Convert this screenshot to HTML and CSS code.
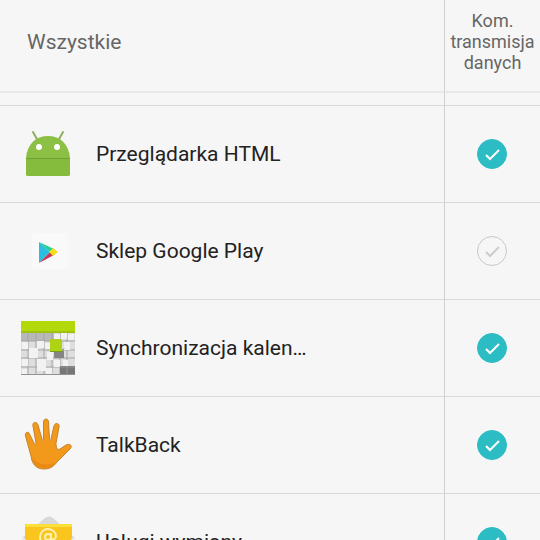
FILE: index.html
```html
<!DOCTYPE html>
<html lang="pl">
  <head>
    <meta charset="UTF-8" />
    <meta name="viewport" content="width=device-width, initial-scale=1.0" />
    <title>Kom. transmisja danych</title>
    <link rel="stylesheet" href="styles.css">
  </head>
  <body>
    <main class="screen">
      <table class="app-table">
        <thead>
          <tr class="head-row">
            <th class="all-apps" scope="col">Wszystkie</th>
            <th class="data-head" scope="col">Kom. transmisja danych</th>
          </tr>
        </thead>
        <tbody>
          <tr class="spacer-row">
            <td></td>
            <td class="data-cell"></td>
          </tr>
          <tr>
            <td>
              <label class="app" for="html">
                <svg class="icon" viewBox="0 0 54 54" aria-hidden="true">
                  <path d="M12 5l5 9M42 5l-5 9" stroke="#8fae5c" stroke-width="2" stroke-linecap="round" />
                  <path d="M5 31C6 17 15 9 27 9s21 8 22 22v16q0 2-2 2H7q-2 0-2-2z" fill="#8cc044" />
                  <path d="M5 32h44v15q0 2-2 2H7q-2 0-2-2z" fill="#86bc3e" />
                  <path d="M5 31.500h44" stroke="#6f9f37" />
                  <circle cx="18" cy="20" r="3" fill="#fff" />
                  <circle cx="36" cy="20" r="3" fill="#fff" />
                </svg>
                <span>Przeglądarka HTML</span>
              </label>
            </td>
            <td class="data-cell"><input class="check" type="checkbox" id="html" checked /></td>
          </tr>
          <tr>
            <td>
              <label class="app" for="play">
                <svg class="icon" viewBox="0 0 54 54" aria-hidden="true">
                  <rect x="11" y="9" width="36" height="36" rx="3" fill="#f9f9f9" />
                  <path d="M18 18v21l11-11z" fill="#29bfe0" />
                  <path d="M18 18l11 10 4-3z" fill="#26cf96" />
                  <path d="M18 39l11-11 4 3z" fill="#c73858" />
                  <path d="M28 28l4-4 5 4-5 4z" fill="#f5dc1c" />
                </svg>
                <span>Sklep Google Play</span>
              </label>
            </td>
            <td class="data-cell"><input class="check" type="checkbox" id="play" /></td>
          </tr>
          <tr>
            <td>
              <label class="app" for="calendar">
                <svg class="icon" viewBox="0 0 54 54" aria-hidden="true">
                  <path d="M0 11h54v43H0z" fill="#dedede" />
                  <path d="M0 12h33v8H0z" fill="#b8b8b8" />
                  <path d="M0 20h54M0 29h54M0 37h54M0 46h54M7 12v42M15 12v42M23 12v42M31 12v42M39 12v42M46 12v42" stroke="#a5a5a5" fill="none" />
                  <g fill="#f2f2f2">
                    <path d="M1 21h6v7H1zM16 20h7v7h-7zM24 22h7v6h-7zM33 13h6v6h-6zM40 12h6v6h-6zM47 13h6v6h-6zM43 21h6v8h-6z" />
                    <path d="M8 27h9v10H8zM1 38h6v7H1zM16 38h9v12h-9zM26 31h6v8h-6zM33 39h6v7h-6zM1 48h5v5H1zM25 47h6v6h-6zM42 39h5v6h-5z" />
                  </g>
                  <path d="M33 30h10v7H33z" fill="#858585" />
                  <path d="M39 45h15v9H39z" fill="#777" />
                  <path d="M39 46h15M46 45v9M0 53.500h54" stroke="#929292" />
                  <path d="M0 0h54v12H0z" fill="#b3d90b" />
                  <path d="M0 11h54" stroke="#8aac12" />
                  <rect x="29" y="18" width="12" height="13" rx="1" fill="#add314" />
                  <path d="M29 30.500h12l2-3" stroke="#799a20" fill="none" />
                </svg>
                <span>Synchronizacja kalen…</span>
              </label>
            </td>
            <td class="data-cell"><input class="check" type="checkbox" id="calendar" checked /></td>
          </tr>
          <tr>
            <td>
              <label class="app" for="talkback">
                <svg class="icon" viewBox="0 0 54 54" aria-hidden="true">
                  <path d="M4.500 18c-1-4 3-5 4-2l5 10c1 1 2 1 1.500-1L12 8c-1-4 4-5 5-1l4 14c.5 2 1.500 2 1.500 0V4c0-4 5-4 5 0l1 17c0 2 1 2 1.500 0l3-13c1-4 6-3 5 1l-3 16c0 4 1 8 4 6l6-4c4-2 7 1 4 4L36 44c-4 5-7 7-13 7-8 0-12-5-13-13z" fill="#f2981b" stroke="#c4842f" />
                  <path d="M11 39c5 7 14 10 25 5-4 4-7 6-13 6-7 0-11-4-12-11z" fill="#e98a12" />
                </svg>
                <span>TalkBack</span>
              </label>
            </td>
            <td class="data-cell"><input class="check" type="checkbox" id="talkback" checked /></td>
          </tr>
          <tr>
            <td>
              <label class="app" for="exchange">
                <svg class="icon" viewBox="0 0 54 54" aria-hidden="true">
                  <path d="M1 23L24 3q4-3 8 0l22 20v28H1z" fill="#d9d9dc" />
                  <path d="M4 9h47v34H4z" fill="#fac51c" />
                  <path d="M4 9h47v3H4z" fill="#fbe03a" />
                  <circle cx="27" cy="22" r="3" fill="none" stroke="#fff2ae" stroke-width="2" />
                  <path d="M30 18v5c1 3 5 1 5-2 0-4-4-7-8-7s-8 3-8 8 4 7 8 7" fill="none" stroke="#fff2ae" stroke-width="2" />
                  <path d="M1 22l26 18 27-18v30H1z" fill="#ececee" />
                </svg>
                <span>Usługi wymiany</span>
              </label>
            </td>
            <td class="data-cell"><input class="check" type="checkbox" id="exchange" checked /></td>
          </tr>
        </tbody>
      </table>
    </main>
  </body>
</html>
```
FILE: styles.css
```css
* {
  box-sizing: border-box;
}
body {
  margin: 0;
  font-family: Roboto, sans-serif;
  background-color: #f6f6f6;
  color: #222;
}
.screen {
  height: 100vh;
  overflow: hidden;
}
.app-table {
  width: 100%;
  border-spacing: 0;
  table-layout: fixed;
}
th {
  height: 93px;
  border-bottom: 2px solid #e8e8e8;
  color: #666;
  font-weight: 400;
}
.all-apps {
  padding: 0 27px 8px;
  font-size: 21px;
  text-align: left;
}
.data-head {
  width: 96px;
  padding: 0 4px 8px;
  border-left: 1px solid #cfcfcf;
  font-size: 18px;
  line-height: 21px;
  text-align: center;
}
td {
  height: 97px;
  padding: 0;
  border-bottom: 1px solid #d9d9d9;
}
.spacer-row td {
  height: 13px;
}
.data-cell {
  padding-right: 2px;
  border-left: 1px solid #cfcfcf;
  text-align: center;
}
.app {
  display: flex;
  align-items: center;
  gap: 21px;
  padding-left: 21px;
  font-size: 21px;
  white-space: nowrap;
}
.icon {
  flex: none;
  width: 54px;
  height: 54px;
}
/* Round check mark */
.check {
  appearance: none;
  display: block;
  width: 30px;
  height: 30px;
  margin: 0 auto;
  border: 1px solid #c8c8c8;
  border-radius: 50%;
  background: url("data:image/svg+xml,<svg xmlns='http://www.w3.org/2000/svg' viewBox='0 0 28 28'><path d='M8 15l4 4 9-9' fill='none' stroke='%23ccc' stroke-width='2'/></svg>") center / 28px no-repeat;
}
.check:checked {
  border-color: #2bbcc4;
  background-color: #2bbcc4;
  background-image: url("data:image/svg+xml,<svg xmlns='http://www.w3.org/2000/svg' viewBox='0 0 28 28'><path d='M8 15l4 4 9-9' fill='none' stroke='white' stroke-width='2'/></svg>");
}
```
